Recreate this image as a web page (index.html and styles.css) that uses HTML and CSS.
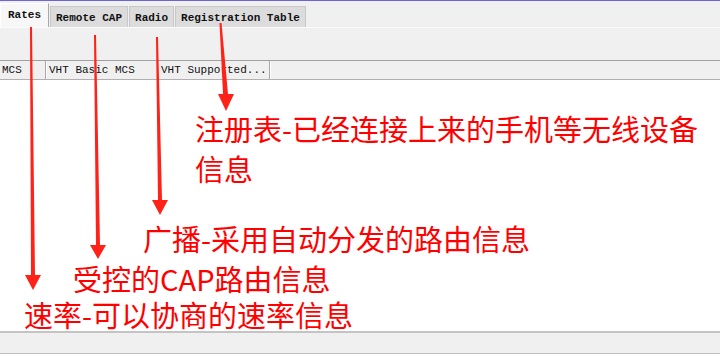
FILE: index.html
```html
<!DOCTYPE html>
<html lang="zh-CN">
<head>
  <meta charset="UTF-8" />
  <title>Wireless Tables</title>
  <link rel="stylesheet" href="styles.css">
</head>
<body>

  <div class="window">
    <div class="tabs">
      <div class="tab tab-active">Rates</div>
      <div class="tab">Remote CAP</div>
      <div class="tab">Radio</div>
      <div class="tab">Registration Table</div>
    </div>

    <div class="toolbar"></div>

    <div class="header">
      <div class="col col-mcs">MCS</div>
      <div class="col">VHT Basic MCS</div>
      <div class="col">VHT Supported...</div>
      <div class="col col-rest"></div>
    </div>

    <div class="list">
      <p class="note note-reg">注册表-已经连接上来的手机等无线设备信息</p>
      <p class="note note-radio">广播-采用自动分发的路由信息</p>
      <p class="note note-cap">受控的CAP路由信息</p>
      <p class="note note-rates">速率-可以协商的速率信息</p>
    </div>

    <div class="statusbar"></div>
  </div>

  <!-- annotation arrows drawn over the window -->
  <svg class="arrows" width="720" height="356" viewBox="0 0 720 356">
    <polygon points="30,27 32,27 35,275 41,275 33,290 25,275 31,275" />
    <polygon points="94,35 96,35 100,245 106,245 98,259 90,245 96,245" />
    <polygon points="156,37 158,37 162,200 168,200 160,215 152,200 158,200" />
    <polygon points="219.5,23 221.5,23 228,94 234,94 226,111 218,94 223,94" />
  </svg>

</body>
</html>
```

FILE: styles.css
```css
body {
  margin: 0;
  width: 720px;
  height: 356px;
  overflow: hidden;
  position: relative;
  background: #fff;
  font-family: 'Liberation Mono', 'DejaVu Sans Mono', monospace;
  font-size: 11px;
  color: #111;
}
.window {
  background: #f0f0f0;
  border-top: 1px solid #6b66d8;
}
.tabs {
  display: flex;
  align-items: flex-end;
  height: 26px;
  border-bottom: 1px solid #fbfbfb;
}
.tab {
  box-sizing: border-box;
  height: 21px;
  padding: 3px 5px 0;
  margin-left: 1px;
  line-height: 17px;
  background: #dcdcdc;
  border: 1px solid #c8c8c8;
  border-bottom: none;
  font-weight: bold;
}
.tab-active {
  height: 24px;
  margin-left: 0;
  padding: 3px 7px 0;
  background: #f7f7f7;
  border-color: #fff #a8a8a8 #f7f7f7 #fff;
}
.toolbar {
  height: 32px;
}
.header {
  display: flex;
  height: 18px;
  border-top: 1px solid #a0a0a0;
  border-bottom: 1px solid #b0b0b0;
}
.col {
  box-sizing: border-box;
  width: 112px;
  padding-left: 3px;
  line-height: 18px;
  border-right: 1px solid #a8a8a8;
  box-shadow: inset 1px 0 #fff;
  white-space: nowrap;
}
.col-mcs {
  width: 46px;
  padding-left: 2px;
  box-shadow: none;
}
.col-rest {
  flex: 1;
  border-right: none;
}
.list {
  height: 251px;
  overflow: hidden;
  background: #fff;
}
.note {
  margin: 0;
  color: #f00;
  font-family: 'Noto Sans CJK SC', sans-serif;
  font-size: 29px;
  line-height: 38px;
}
.note-reg {
  margin-top: 28px;
  padding-left: 195px;
  line-height: 40px;
}
.note-radio {
  margin-top: 31px;
  padding-left: 143px;
}
.note-cap {
  margin-top: 2px;
  padding-left: 73px;
}
.note-rates {
  margin-top: 2px;
  padding-left: 24px;
  line-height: 30px;
}
.statusbar {
  height: 20px;
  border-top: 2px solid #c4c4c4;
  border-bottom: 1px solid #c0c0c0;
}
.arrows {
  position: absolute;
  top: 0;
  left: 0;
  pointer-events: none;
}
.arrows polygon {
  fill: #ff2218;
}
```
